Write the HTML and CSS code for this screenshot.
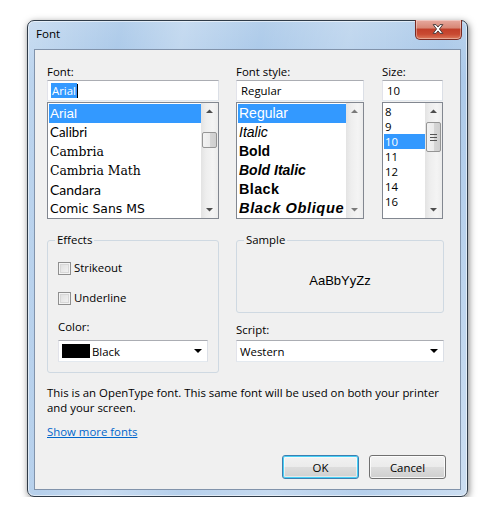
FILE: index.html
```html
<!DOCTYPE html>
<html>
<head>
<meta charset="utf-8">
<link rel="stylesheet" href="styles.css">
</head>
<body>
<div class="window">
  <div class="titlebar">
    <span class="title">Font</span>
    <div class="close">
      <svg width="47" height="20" viewBox="0 0 47 20">
        <path d="M18.5 5.5 L21.5 5.5 L23.5 8 L25.5 5.5 L28.5 5.5 L25 10 L28.5 14.5 L25.5 14.5 L23.5 12 L21.5 14.5 L18.5 14.5 L22 10 Z" fill="#ffffff" stroke="#4a3a3a" stroke-width="1" stroke-linejoin="round"/>
      </svg>
    </div>
  </div>
  <div class="client">
    <div class="top-row">
      <div class="col col-font">
        <div class="lbl">Font:</div>
        <div class="input"><span class="sel-text">Arial</span><span class="caret"></span></div>
        <div class="listbox">
          <div class="items">
            <div class="item big selected f-arial">Arial</div>
            <div class="item big f-calibri">Calibri</div>
            <div class="item big f-cambria">Cambria</div>
            <div class="item big f-cambria">Cambria Math</div>
            <div class="item big f-candara">Candara</div>
            <div class="item big f-comic">Comic Sans MS</div>
          </div>
          <div class="scrollbar">
            <svg class="arrow" width="17" height="17" viewBox="0 0 17 17"><path d="M5 10 L8.5 6.5 L12 10 Z" fill="#4d4d4d"/></svg>
            <div class="track">
              <div class="thumb thumb-font"></div>
            </div>
            <svg class="arrow" width="17" height="17" viewBox="0 0 17 17"><path d="M5 7 L8.5 10.5 L12 7 Z" fill="#4d4d4d"/></svg>
          </div>
        </div>
      </div>
      <div class="col col-style">
        <div class="lbl">Font style:</div>
        <div class="input"><span class="plain-text">Regular</span></div>
        <div class="listbox">
          <div class="items">
            <div class="item big selected st-regular">Regular</div>
            <div class="item big st-italic">Italic</div>
            <div class="item big st-bold">Bold</div>
            <div class="item big st-bolditalic">Bold Italic</div>
            <div class="item big st-black">Black</div>
            <div class="item big st-blackoblique">Black Oblique</div>
          </div>
          <div class="scrollbar">
            <svg class="arrow" width="17" height="17" viewBox="0 0 17 17"><path d="M5 10 L8.5 6.5 L12 10 Z" fill="#7a7a7a"/></svg>
            <div class="track"></div>
            <svg class="arrow" width="17" height="17" viewBox="0 0 17 17"><path d="M5 7 L8.5 10.5 L12 7 Z" fill="#7a7a7a"/></svg>
          </div>
        </div>
      </div>
      <div class="col col-size">
        <div class="lbl">Size:</div>
        <div class="input"><span class="plain-text">10</span></div>
        <div class="listbox">
          <div class="items">
            <div class="item small">8</div>
            <div class="item small">9</div>
            <div class="item small selected">10</div>
            <div class="item small">11</div>
            <div class="item small">12</div>
            <div class="item small">14</div>
            <div class="item small">16</div>
          </div>
          <div class="scrollbar">
            <svg class="arrow" width="17" height="17" viewBox="0 0 17 17"><path d="M5 10 L8.5 6.5 L12 10 Z" fill="#4d4d4d"/></svg>
            <div class="track">
              <div class="thumb thumb-size"><span class="grip"></span><span class="grip"></span><span class="grip"></span></div>
            </div>
            <svg class="arrow" width="17" height="17" viewBox="0 0 17 17"><path d="M5 7 L8.5 10.5 L12 7 Z" fill="#4d4d4d"/></svg>
          </div>
        </div>
      </div>
    </div>

    <div class="mid-row">
      <fieldset class="group effects">
        <legend>Effects</legend>
        <label class="check"><span class="box"></span>Strikeout</label>
        <label class="check second"><span class="box"></span>Underline</label>
        <div class="lbl color-lbl">Color:</div>
        <div class="combo"><span class="swatch"></span><span class="combo-text">Black</span><span class="drop"></span></div>
      </fieldset>
      <div class="right-col">
        <fieldset class="group sample">
          <legend>Sample</legend>
          <div class="sample-body">AaBbYyZz</div>
        </fieldset>
        <div class="lbl script-lbl">Script:</div>
        <div class="combo"><span class="combo-text">Western</span><span class="drop"></span></div>
      </div>
    </div>

    <p class="desc">This is an OpenType font. This same font will be used on both your printer and your screen.</p>
    <a class="link" href="#">Show more fonts</a>

    <div class="buttons">
      <button class="btn default">OK</button>
      <button class="btn">Cancel</button>
    </div>
  </div>
</div>
</body>
</html>
```

FILE: styles.css
```css
html, body {
  margin: 0;
  padding: 0;
  background: #ffffff;
}
body {
  font-family: "Open Sans", "Noto Sans", sans-serif;
  font-size: 11.4px;
  color: #000;
}
.window {
  box-sizing: border-box;
  margin: 20px 0 0 27px;
  width: 441px;
  height: 477px;
  border: 1px solid #2f3b48;
  border-radius: 7px;
  padding: 0 6px 6px 6px;
  display: flex;
  flex-direction: column;
  background:
    linear-gradient(100deg, rgba(255,255,255,0.3) 0%, rgba(255,255,255,0) 18%, rgba(255,255,255,0.25) 30%, rgba(255,255,255,0) 45%, rgba(255,255,255,0.22) 62%, rgba(255,255,255,0) 80%, rgba(255,255,255,0.3) 100%),
    linear-gradient(180deg, #b4cfeb 0%, #a6c6e8 12%, #b6d0ec 100%);
  box-shadow: 1px 2px 7px rgba(0,0,0,0.5), inset 0 0 0 1px rgba(255,255,255,0.55);
}
.titlebar {
  height: 28px;
  flex: none;
  display: flex;
  justify-content: space-between;
  align-items: flex-start;
}
.title {
  padding: 5px 0 0 2px;
  line-height: 16px;
  font-size: 11.6px;
}
.close {
  margin-top: -1px;
  margin-right: -1px;
  width: 47px;
  height: 20px;
  box-sizing: border-box;
  border: 1px solid #7a2a22;
  border-top: none;
  border-radius: 0 0 5px 5px;
  background: linear-gradient(180deg, #e7a99f 0%, #d88877 40%, #c23f2a 50%, #c94a32 75%, #dd7a5c 100%);
  box-shadow: inset 0 0 0 1px rgba(255,255,255,0.35);
  display: flex;
}
.close svg {
  margin: -1px 0 0 -1px;
}
.client {
  flex: 1;
  background: #f0f0f0;
  border: 1px solid #8193ab;
  padding: 0 0 0 12px;
  display: flex;
  flex-direction: column;
}
.top-row {
  display: grid;
  grid-template-columns: 172px 128px 62px;
  column-gap: 17px;
  padding-top: 14px;
}
.col-size {
  margin-left: 1px;
}
.lbl {
  line-height: 16px;
  height: 16px;
}
.input {
  box-sizing: border-box;
  height: 21px;
  background: #fff;
  border: 1px solid;
  border-color: #abadb3 #dbdfe6 #e3e9ef #e2e3ea;
  display: flex;
  align-items: center;
  padding-left: 3px;
  line-height: 15px;
}
.sel-text {
  background: #3399ff;
  color: #fff;
  padding: 0 1px;
}
.caret {
  width: 1px;
  height: 14px;
  background: #000;
}
.plain-text {
  padding-left: 1px;
}
.listbox {
  margin-top: 1px;
  box-sizing: border-box;
  height: 117px;
  border: 1px solid #828790;
  background: #fff;
  display: flex;
  overflow: hidden;
}
.items {
  flex: 1;
  padding: 1px 0 0 1px;
  overflow: hidden;
}
.item {
  white-space: nowrap;
  padding-left: 1px;
  color: #000;
}
.item.big {
  height: 19px;
  line-height: 19px;
}
.item.small {
  height: 15px;
  line-height: 15px;
}
.item.selected {
  background: #3399ff;
  color: #fff;
}
.f-arial { font-family: "Liberation Sans", sans-serif; font-size: 13.5px; }
.f-calibri { font-family: "Lato", sans-serif; font-size: 13.3px; }
.f-cambria { font-family: "DejaVu Serif", serif; font-size: 12.4px; }
.f-candara { font-family: "Lato", sans-serif; font-size: 14px; }
.f-comic { font-family: "DejaVu Sans", sans-serif; font-size: 12.4px; }
.st-regular, .st-italic, .st-bold, .st-bolditalic, .st-black, .st-blackoblique {
  font-family: "Liberation Sans", sans-serif;
  font-size: 14px;
}
.st-italic { font-style: italic; }
.st-bold { font-weight: bold; }
.st-bolditalic { font-weight: bold; font-style: italic; }
.st-black { font-weight: 900; letter-spacing: 0.4px; font-size: 14.4px; }
.st-blackoblique { font-weight: 900; font-style: italic; letter-spacing: 0.6px; font-size: 14.6px; }
.scrollbar {
  width: 17px;
  flex: none;
  display: flex;
  flex-direction: column;
  background: linear-gradient(90deg, #e3e3e3, #eeeeee 30%, #f4f4f4 70%, #ececec);
}
.arrow {
  display: block;
  flex: none;
}
.track {
  flex: 1;
  position: relative;
}
.thumb {
  position: absolute;
  left: 1px;
  right: 1px;
  box-sizing: border-box;
  border: 1px solid #959595;
  border-radius: 2px;
  background: linear-gradient(90deg, #f2f2f2, #ebebeb 50%, #d6d6d6 51%, #cfcfcf);
}
.thumb-font {
  top: 12px;
  height: 16px;
}
.thumb-size {
  top: 2px;
  height: 30px;
  display: flex;
  flex-direction: column;
  justify-content: center;
  align-items: center;
  gap: 2px;
}
.grip {
  display: block;
  width: 7px;
  height: 1px;
  background: #555;
}

.mid-row {
  display: grid;
  grid-template-columns: 172px 208px;
  column-gap: 17px;
  margin-top: 13px;
  align-items: start;
}
.group {
  margin: 0;
  border: 1px solid #cfd9e2;
  border-radius: 3px;
  min-width: 0;
}
.group legend {
  padding: 0 2px;
  line-height: 16px;
}
.effects {
  padding: 12px 10px 10px 10px;
}
.effects legend {
  margin-left: -3px;
}
.check {
  display: flex;
  align-items: center;
  height: 16px;
  line-height: 16px;
}
.check.second {
  margin-top: 14px;
}
.box {
  box-sizing: border-box;
  width: 13px;
  height: 13px;
  border: 1px solid #8f8f8f;
  background: linear-gradient(135deg, #dcdcdc, #f6f6f6);
  box-shadow: inset 0 0 0 1px #f4f4f4, inset 0 0 0 2px #d8d8d8;
  margin-right: 3px;
}
.color-lbl {
  margin-top: 13px;
}
.combo {
  box-sizing: border-box;
  height: 22px;
  margin-top: 5px;
  background: #fff;
  border: 1px solid;
  border-color: #abadb3 #dbdfe6 #e3e9ef #e2e3ea;
  display: flex;
  align-items: center;
  padding-left: 3px;
}
.swatch {
  width: 28px;
  height: 14px;
  background: #000;
  margin-right: 2px;
}
.combo-text {
  flex: 1;
}
.drop {
  width: 0;
  height: 0;
  border-left: 4px solid transparent;
  border-right: 4px solid transparent;
  border-top: 4px solid #000;
  margin-right: 5px;
}
.sample {
  padding: 0 9px;
}
.sample legend {
  margin-left: -2px;
}
.sample-body {
  height: 64px;
  display: flex;
  align-items: center;
  justify-content: center;
  font-family: "Liberation Sans", sans-serif;
  font-size: 13px;
}
.script-lbl {
  margin-top: 9px;
}
.right-col .combo {
  margin-top: 2px;
}
.desc {
  margin: 12px 14px 0 0;
  line-height: 15px;
}
.link {
  margin-top: 9px;
  align-self: flex-start;
  color: #0066cc;
  text-decoration: underline;
  line-height: 16px;
}
.buttons {
  display: flex;
  justify-content: flex-end;
  gap: 10px;
  padding-right: 14px;
  margin-top: 15px;
}
.btn {
  box-sizing: border-box;
  width: 77px;
  height: 24px;
  font-family: inherit;
  font-size: inherit;
  color: #000;
  border: 1px solid #707070;
  border-radius: 3px;
  background: linear-gradient(180deg, #f2f2f2 0%, #ebebeb 49%, #dddddd 50%, #cfcfcf 100%);
  box-shadow: inset 0 0 0 1px rgba(255,255,255,0.8);
  padding: 0;
}
.btn.default {
  border-color: #3c7fb1;
  box-shadow: inset 0 0 0 1px #48d0f6, inset 0 0 0 2px rgba(255,255,255,0.5);
}
```
